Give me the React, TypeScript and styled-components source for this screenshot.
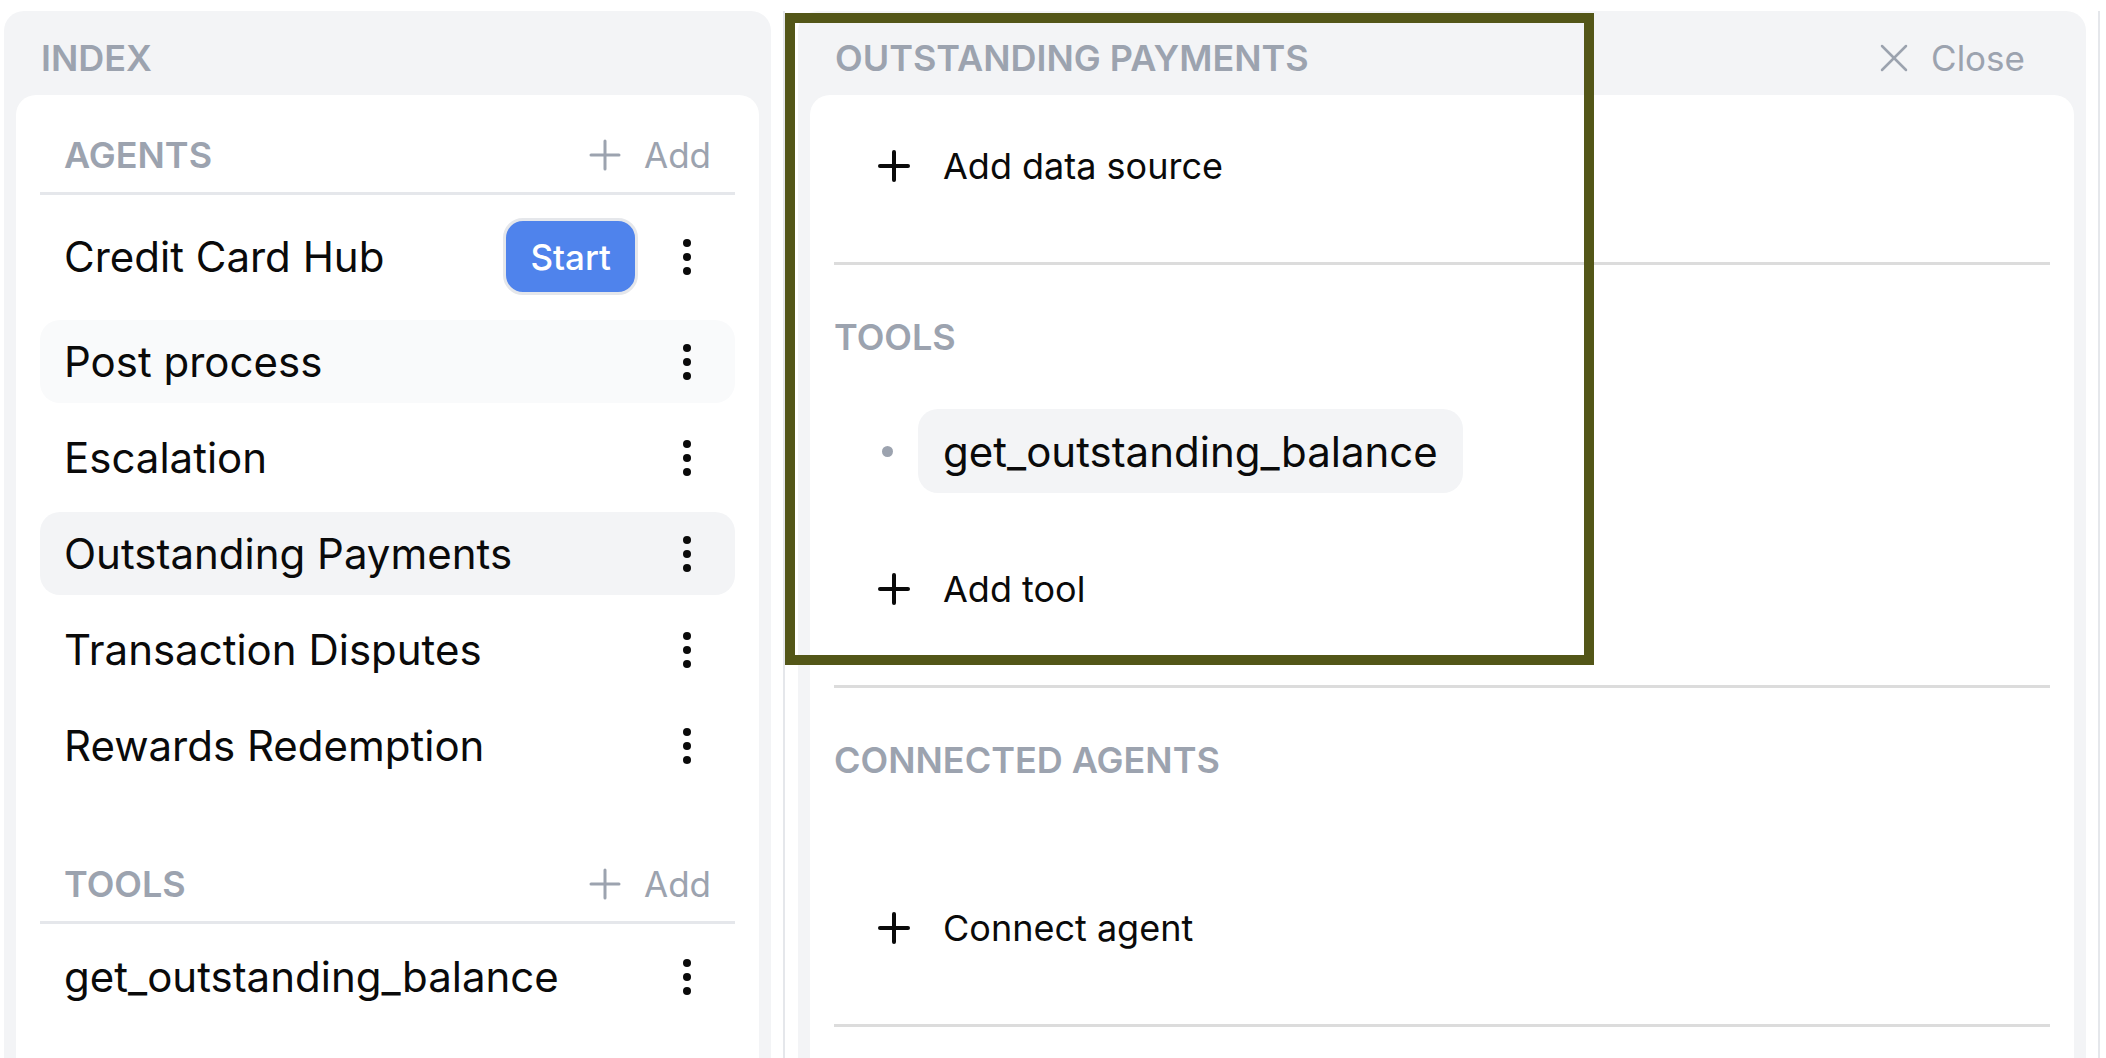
import React from 'react';
import styled, { createGlobalStyle } from 'styled-components';

const GlobalStyle = createGlobalStyle`
  html, body { margin: 0; padding: 0; overflow: hidden; background: #ffffff; }
  body { font-family: Inter, "Noto Sans", sans-serif; color: #0a0a0a; }
  * { box-sizing: border-box; }
`;

const Page = styled.div`
  position: relative;
  display: flex;
  align-items: flex-start;
  gap: 12px;
  padding: 11px 0 0 4px;
  height: 1058px;
  overflow: hidden;
`;

const Panel = styled.section<{ $width: number }>`
  width: ${p => p.$width}px;
  flex-shrink: 0;
  height: 1120px;
  background: #f3f4f6;
  border-radius: 20px 20px 0 0;
  padding: 0 12px;
  display: flex;
  flex-direction: column;
`;

const DetailWrap = styled.div`
  width: 1317px;
  flex-shrink: 0;
  height: 1120px;
  border-left: 2px solid #e5e7eb;
  border-right: 2px solid #e5e7eb;
  padding: 0 12px 0 13px;
`;

const PanelHeader = styled.header`
  height: 84px;
  flex-shrink: 0;
  padding: 10px 49px 0 25px;
  display: flex;
  align-items: center;
  justify-content: space-between;
`;

const Label = styled.h2`
  margin: 0;
  font-size: 36px;
  line-height: 50px;
  font-weight: 600;
  color: #9ca3af;
  text-transform: uppercase;
`;

const Card = styled.div<{ $pad: string }>`
  flex: 1;
  background: #ffffff;
  border-radius: 20px;
  padding: ${p => p.$pad};
`;

const IndexSection = styled.div<{ $gapTop?: number }>`
  margin-top: ${p => p.$gapTop ?? 0}px;
`;

const SectionHeader = styled.div`
  height: 77px;
  padding: 0 24px;
  border-bottom: 3px solid #e5e7eb;
  display: flex;
  align-items: center;
  justify-content: space-between;
`;

const GhostAction = styled.button`
  display: flex;
  align-items: center;
  gap: 15px;
  padding: 0;
  border: none;
  background: none;
  font-family: inherit;
  font-size: 35px;
  line-height: 48px;
  color: #9ca3af;
  cursor: pointer;
`;

const ItemList = styled.div`
  display: flex;
  flex-direction: column;
  gap: 13px;
  padding-top: 11px;
`;

const Row = styled.div<{ $tall?: boolean; $tone?: 'none' | 'hover' | 'active' }>`
  height: ${p => (p.$tall ? 101 : 83)}px;
  padding: 0 24px;
  display: flex;
  align-items: center;
  border-radius: 20px;
  background: ${p =>
    p.$tone === 'active' ? '#f3f4f6' : p.$tone === 'hover' ? '#f9fafb' : 'transparent'};
  font-size: 42px;
  color: #0a0a0a;
`;

const RowName = styled.span`
  flex: 1;
  white-space: nowrap;
`;

const StartButton = styled.button`
  height: 77px;
  padding: 0 24px;
  margin-right: 25px;
  border: 3px solid #e5e7eb;
  border-radius: 20px;
  background: #4f83ec;
  color: #ffffff;
  font-family: inherit;
  font-size: 35px;
  font-weight: 500;
`;

const IconBox = styled.span`
  width: 48px;
  height: 48px;
  flex-shrink: 0;
  display: flex;
  align-items: center;
  justify-content: center;
`;

const DetailPanel = styled(Panel)`
  width: 100%;
`;

const CloseAction = styled(GhostAction)`
  gap: 13px;
`;

const Section = styled.div`
  padding: 47px 0 72px;
  border-bottom: 3px solid #dcdcdc;
`;

const SectionItems = styled.div`
  margin: 47px 0 72px;
  display: flex;
  flex-direction: column;
  gap: 13px;
`;

const AddRow = styled.button`
  height: 48px;
  padding: 0 0 0 36px;
  display: flex;
  align-items: center;
  gap: 25px;
  border: none;
  background: none;
  font-family: inherit;
  font-size: 36px;
  color: #0a0a0a;
  cursor: pointer;
`;

const ToolItem = styled.div`
  display: flex;
  align-items: center;
`;

const Bullet = styled.span`
  width: 11px;
  height: 11px;
  margin-left: 48px;
  border-radius: 50%;
  background: #9ca3af;
  flex-shrink: 0;
`;

const Chip = styled.span`
  height: 84px;
  margin-left: 25px;
  padding: 0 25px;
  display: flex;
  align-items: center;
  border-radius: 20px;
  background: #f3f4f6;
  font-size: 42px;
  color: #0a0a0a;
`;

const Highlight = styled.div`
  position: absolute;
  left: 785px;
  top: 13px;
  width: 809px;
  height: 652px;
  border: 10px solid #535618;
  pointer-events: none;
`;

const PlusIcon = ({ stroke, color }: { stroke: number; color: string }) => (
  <IconBox>
    <svg width="48" height="48" viewBox="0 0 24 24" fill="none" stroke={color} strokeWidth={stroke} strokeLinecap="round">
      <path d="M5 12h14" />
      <path d="M12 5v14" />
    </svg>
  </IconBox>
);

const XIcon = () => (
  <IconBox>
    <svg width="48" height="48" viewBox="0 0 24 24" fill="none" stroke="#9ca3af" strokeWidth={1.25} strokeLinecap="round">
      <path d="M18 6 6 18" />
      <path d="m6 6 12 12" />
    </svg>
  </IconBox>
);

const Kebab = () => (
  <IconBox>
    <svg width="48" height="48" viewBox="0 0 48 48" fill="#0a0a0a">
      <circle cx="24" cy="10" r="4" />
      <circle cx="24" cy="24" r="4" />
      <circle cx="24" cy="38" r="4" />
    </svg>
  </IconBox>
);

type Agent = { name: string; tone?: 'none' | 'hover' | 'active'; start?: boolean };

const agents: Agent[] = [
  { name: 'Credit Card Hub', start: true },
  { name: 'Post process', tone: 'hover' },
  { name: 'Escalation' },
  { name: 'Outstanding Payments', tone: 'active' },
  { name: 'Transaction Disputes' },
  { name: 'Rewards Redemption' },
];

export default function App() {
  return (
    <>
      <GlobalStyle />
      <Page>
        <Panel $width={767}>
          <PanelHeader>
            <Label>Index</Label>
          </PanelHeader>
          <Card $pad="23px 24px 0">
            <IndexSection>
              <SectionHeader>
                <Label>Agents</Label>
                <GhostAction>
                  <PlusIcon stroke={1.5} color="#9ca3af" />
                  Add
                </GhostAction>
              </SectionHeader>
              <ItemList>
                {agents.map(a => (
                  <Row key={a.name} $tall={a.start} $tone={a.tone}>
                    <RowName>{a.name}</RowName>
                    {a.start && <StartButton>Start</StartButton>}
                    <Kebab />
                  </Row>
                ))}
              </ItemList>
            </IndexSection>
            <IndexSection $gapTop={60}>
              <SectionHeader>
                <Label>Tools</Label>
                <GhostAction>
                  <PlusIcon stroke={1.5} color="#9ca3af" />
                  Add
                </GhostAction>
              </SectionHeader>
              <ItemList>
                <Row>
                  <RowName>get_outstanding_balance</RowName>
                  <Kebab />
                </Row>
              </ItemList>
            </IndexSection>
          </Card>
        </Panel>

        <DetailWrap>
          <DetailPanel $width={1288}>
            <PanelHeader>
              <Label>Outstanding Payments</Label>
              <CloseAction>
                <XIcon />
                Close
              </CloseAction>
            </PanelHeader>
            <Card $pad="0 24px">
              <Section>
                <AddRow>
                  <PlusIcon stroke={2} color="#0a0a0a" />
                  Add data source
                </AddRow>
              </Section>
              <Section>
                <Label>Tools</Label>
                <SectionItems>
                  <ToolItem>
                    <Bullet />
                    <Chip>get_outstanding_balance</Chip>
                  </ToolItem>
                </SectionItems>
                <AddRow>
                  <PlusIcon stroke={2} color="#0a0a0a" />
                  Add tool
                </AddRow>
              </Section>
              <Section>
                <Label>Connected Agents</Label>
                <SectionItems />
                <AddRow>
                  <PlusIcon stroke={2} color="#0a0a0a" />
                  Connect agent
                </AddRow>
              </Section>
            </Card>
          </DetailPanel>
        </DetailWrap>
        <Highlight />
      </Page>
    </>
  );
}
